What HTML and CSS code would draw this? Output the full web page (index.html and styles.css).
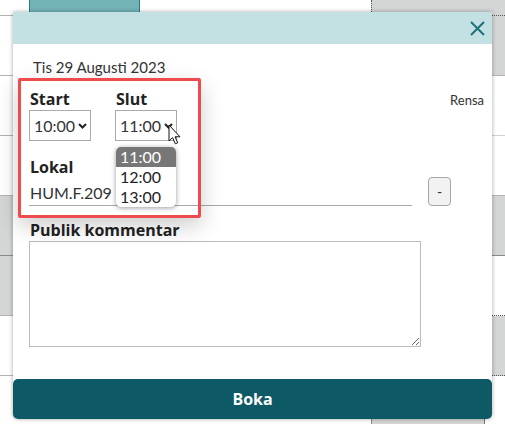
FILE: index.html
```html
<!DOCTYPE html>
<html lang="sv">
<head>
<meta charset="UTF-8">
<title>Boka lokal</title>
<link rel="stylesheet" href="styles.css">
</head>
<body>
  <div class="calendar">
    <div class="cell line"></div><div class="cell booked"></div><div class="cell"></div><div class="cell gray dotted-left dotted-bottom"></div>
    <div class="cell line"></div><div class="cell"></div><div class="cell"></div><div class="cell gray line"></div>
    <div class="cell line"></div><div class="cell"></div><div class="cell"></div><div class="cell line-light"></div>
    <div class="cell line"></div><div class="cell"></div><div class="cell"></div><div class="cell line"></div>
    <div class="cell gray line-dark"></div><div class="cell"></div><div class="cell"></div><div class="cell gray line-dark"></div>
    <div class="cell gray line"></div><div class="cell"></div><div class="cell"></div><div class="cell dotted-bottom"></div>
    <div class="cell line"></div><div class="cell"></div><div class="cell"></div><div class="cell gray dotted-bottom"></div>
    <div class="cell"></div><div class="cell"></div><div class="cell"></div><div class="cell gray split"></div>
  </div>

  <div class="modal">
    <div class="modal-header">
      <button class="close" aria-label="Stäng">
        <svg width="15" height="15" viewBox="0 0 15 15"><path d="M1 1 L14 14 M14 1 L1 14" stroke="#22707a" stroke-width="2" fill="none"/></svg>
      </button>
    </div>

    <div class="modal-body">
      <div class="date">Tis 29 Augusti 2023</div>

      <div class="times">
        <div class="field">
          <label>Start</label>
          <div class="select">
            <select><option>10:00</option></select>
            <svg width="9" height="6" viewBox="0 0 9 6"><path d="M1 1 L4.5 4.5 L8 1" stroke="#222" stroke-width="2" fill="none"/></svg>
          </div>
        </div>
        <div class="field">
          <label>Slut</label>
          <div class="select">
            <select><option>11:00</option></select>
            <svg width="9" height="6" viewBox="0 0 9 6"><path d="M1 1 L4.5 4.5 L8 1" stroke="#222" stroke-width="2" fill="none"/></svg>
            <ul class="options">
              <li class="active">11:00</li>
              <li>12:00</li>
              <li>13:00</li>
            </ul>
            <svg class="cursor" width="14" height="22" viewBox="0 0 14 22"><path d="M1 1 L1 17 L4.6 13.6 L7.3 19.8 L9.7 18.8 L7.1 12.8 L12 12.8 Z" fill="#fff" stroke="#111" stroke-width="1" stroke-linejoin="round"/></svg>
          </div>
        </div>
        <a class="clear">Rensa</a>
      </div>

      <label>Lokal</label>
      <div class="room">
        <input type="text" value="HUM.F.209">
        <button class="remove">-</button>
      </div>

      <label>Publik kommentar</label>
      <textarea></textarea>
    </div>

    <button class="book">Boka</button>

    <div class="highlight"></div>
  </div>
</body>
</html>
```

FILE: styles.css
```css
body {
    margin: 0;
    width: 505px;
    height: 424px;
    overflow: hidden;
    position: relative;
    font-family: Lato, "Liberation Sans", sans-serif;
    color: #333;
    background: #fff;
}

.calendar {
    display: grid;
    grid-template-columns: 29px 111px 231px 134px;
    grid-template-rows: 16px repeat(6, 60px) 48px;
}

.cell {
    box-sizing: border-box;
}

.cell.gray {
    background-color: #d4d6d6;
}

.cell.line {
    border-bottom: 1px solid #b4b4b4;
}

.cell.line-light {
    border-bottom: 1px solid #d0d0d0;
}

.cell.line-dark {
    border-bottom: 1px solid #8a8a8a;
}

.cell.dotted-left {
    border-left: 1px dotted #555;
}

.cell.dotted-bottom {
    border-bottom: 1px dotted #555;
}

.cell.booked {
    background-color: #72b3b8;
    border: 1px solid #2b7c84;
    border-top: 0;
    height: 13px;
}

.cell.split {
    border-left: 1px solid #888;
    border-right: 1px solid #777;
    margin-right: 20px;
}

.modal {
    position: absolute;
    top: 12px;
    left: 13px;
    width: 479px;
    height: 407px;
    display: flex;
    flex-direction: column;
    background: #fff;
    border-radius: 0 0 5px 5px;
    box-shadow: 0 0 4px rgba(0, 0, 0, 0.35);
}

.modal-header {
    height: 32px;
    background-color: #c3e0e2;
    display: flex;
    justify-content: flex-end;
    align-items: center;
    padding: 0 7px;
}

.close {
    border: 0;
    background: none;
    padding: 0;
    display: flex;
    cursor: pointer;
}

.modal-body {
    flex: 1;
    padding: 14px 8px 0 16px;
}

.date {
    font-size: 15px;
    line-height: 18px;
    padding-left: 4px;
}

label {
    display: block;
    font-family: "Open Sans", "Liberation Sans", sans-serif;
    font-weight: 700;
    font-size: 16px;
    line-height: 20px;
    color: #222;
    padding-left: 1px;
}

.times {
    display: flex;
    align-items: baseline;
    gap: 24px;
    margin-top: 13px;
}

.select {
    position: relative;
    display: flex;
    align-items: center;
    box-sizing: border-box;
    width: 62px;
    height: 31px;
    border: 1px solid #aaa;
    margin-top: 1px;
}

.select select {
    appearance: none;
    border: 0;
    background: none;
    font-family: Lato, "Liberation Sans", sans-serif;
    font-size: 16px;
    color: #333;
    padding: 0 0 0 4px;
    width: 48px;
    outline: none;
}

.select svg {
    margin-top: 1px;
}

.options {
    position: absolute;
    top: 36px;
    left: 0;
    width: 60px;
    margin: 0;
    padding: 0;
    list-style: none;
    background: #fff;
    border-radius: 5px;
    overflow: hidden;
    box-shadow: 0 1px 5px rgba(0, 0, 0, 0.4);
    font-size: 16px;
    line-height: 20px;
    color: #222;
}

.options li {
    padding-left: 4px;
}

.options li.active {
    background-color: #777;
    color: #fff;
}

.select .cursor {
    position: absolute;
    left: 52px;
    top: 13px;
    margin: 0;
}

.clear {
    margin-left: auto;
    font-size: 13px;
    color: #333;
    cursor: pointer;
}

.times + label {
    margin-top: 16px;
}

.room {
    display: flex;
    align-items: flex-start;
    gap: 16px;
}

.room input {
    width: 383px;
    box-sizing: border-box;
    border: 0;
    border-bottom: 1px solid #aaa;
    padding: 6px 0 3px 1px;
    font-family: Lato, "Liberation Sans", sans-serif;
    font-size: 16px;
    line-height: 19px;
    color: #333;
    outline: none;
}

.remove {
    width: 23px;
    height: 29px;
    border: 1px solid #a6a6a6;
    border-radius: 4px;
    background-color: #f2f2f2;
    font-size: 14px;
    color: #333;
    padding: 0;
}

.room + label {
    margin-top: 14px;
}

textarea {
    display: block;
    box-sizing: border-box;
    width: 392px;
    height: 106px;
    margin-top: 1px;
    border: 1px solid #bbb;
    resize: vertical;
}

.book {
    height: 40px;
    border: 0;
    border-radius: 5px;
    background-color: #0d5a66;
    color: #fff;
    font-family: "Open Sans", "Liberation Sans", sans-serif;
    font-weight: 700;
    font-size: 16px;
    cursor: pointer;
}

.highlight {
    position: absolute;
    left: 5px;
    top: 66px;
    width: 183px;
    height: 140px;
    box-sizing: border-box;
    border: 3px solid #f04a4c;
    border-radius: 2px;
    box-shadow: 0 8px 22px rgba(0, 0, 0, 0.2);
    pointer-events: none;
}
```
